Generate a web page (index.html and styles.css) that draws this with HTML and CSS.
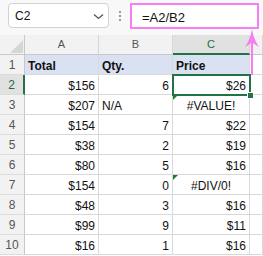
FILE: index.html
```html
<!DOCTYPE html>
<html lang="en">
<head>
    <meta charset="UTF-8">
    <title>Sheet</title>
    <link rel="stylesheet" href="styles.css">
</head>
<body>
    <div class="bar">
        <div class="namebox">
            <span>C2</span>
            <svg class="chev" width="11" height="7" viewBox="0 0 11 7"><path d="M1 1.5 L5.5 5.5 L10 1.5" fill="none" stroke="#555" stroke-width="1.3"/></svg>
        </div>
        <div class="dots"><i></i><i></i><i></i></div>
        <div class="formula">=A2/B2</div>
    </div>

    <div class="sheet">
        <div class="corner"><svg width="13" height="13" viewBox="0 0 13 13"><path d="M13 0 L13 13 L0 13 Z" fill="#d6d6d6"/></svg></div>
        <div class="colhead">A</div>
        <div class="colhead">B</div>
        <div class="colhead active">C</div>
        <div class="colhead"></div>

        <div class="rowhead">1</div>
        <div class="cell head">Total</div>
        <div class="cell head">Qty.</div>
        <div class="cell head">Price</div>
        <div class="cell"></div>

        <div class="rowhead active">2</div>
        <div class="cell num">$156</div>
        <div class="cell num">6</div>
        <div class="cell num selected">$26<span class="selbox"><i class="handle"></i></span></div>
        <div class="cell"></div>

        <div class="rowhead">3</div>
        <div class="cell num">$207</div>
        <div class="cell">N/A</div>
        <div class="cell center err">#VALUE!</div>
        <div class="cell"></div>

        <div class="rowhead">4</div>
        <div class="cell num">$154</div>
        <div class="cell num">7</div>
        <div class="cell num">$22</div>
        <div class="cell"></div>

        <div class="rowhead">5</div>
        <div class="cell num">$38</div>
        <div class="cell num">2</div>
        <div class="cell num">$19</div>
        <div class="cell"></div>

        <div class="rowhead">6</div>
        <div class="cell num">$80</div>
        <div class="cell num">5</div>
        <div class="cell num">$16</div>
        <div class="cell"></div>

        <div class="rowhead">7</div>
        <div class="cell num">$154</div>
        <div class="cell num">0</div>
        <div class="cell center err">#DIV/0!</div>
        <div class="cell"></div>

        <div class="rowhead">8</div>
        <div class="cell num">$48</div>
        <div class="cell num">3</div>
        <div class="cell num">$16</div>
        <div class="cell"></div>

        <div class="rowhead">9</div>
        <div class="cell num">$99</div>
        <div class="cell num">9</div>
        <div class="cell num">$11</div>
        <div class="cell"></div>

        <div class="rowhead">10</div>
        <div class="cell num">$16</div>
        <div class="cell num">1</div>
        <div class="cell num">$16</div>
        <div class="cell"></div>
    </div>

    <!-- callout arrow from C2 up to the formula bar -->
    <svg class="arrow" width="263" height="80" viewBox="0 0 263 80">
        <path d="M252 29 Q253.5 39 259 47 L252 42.5 L245 47 Q250.5 39 252 29 Z" fill="#f77ef0"/>
        <rect x="251" y="40" width="2" height="35" fill="#f77ef0"/>
    </svg>
</body>
</html>
```

FILE: styles.css
```css
html,body{
    margin:0px;
    padding:0px;
}
body{
    width:263px;
    height:256px;
    overflow:hidden;
    position:relative;
    background:#fff;
    font-family:"Liberation Sans", Arial, sans-serif;
    color:#111;
}
.bar{
    height:35px;
    box-sizing:border-box;
    display:flex;
    align-items:flex-start;
    padding:3px 4px 0px 8px;
    background:#f8f8f8;
}
.namebox{
    width:101px;
    height:25px;
    box-sizing:border-box;
    border:1px solid #d2d2d2;
    border-radius:4px;
    background:#fff;
    display:flex;
    align-items:center;
    justify-content:space-between;
    padding:1px 4px 0px 6px;
    font-size:12px;
}
.chev{
    margin-top:1px;
}
.dots{
    width:21px;
    height:25px;
    display:flex;
    flex-direction:column;
    align-items:center;
    justify-content:center;
    gap:2px;
}
.dots>i{
    display:block;
    width:2px;
    height:2px;
    background:#999;
}
.formula{
    flex:1;
    height:26px;
    box-sizing:border-box;
    border:2px solid #f77ef0;
    background:#fff;
    padding:5px 0px 0px 10px;
    font-size:13px;
    line-height:16px;
}
.sheet{
    display:grid;
    grid-template-columns:25px 74px 74px 77px 1fr;
    grid-template-rows:repeat(11, 20px);
}
.corner,.colhead,.rowhead{
    background:#f2f2f2;
    box-sizing:border-box;
    color:#555;
}
.corner{
    border-right:1px solid #c8c8c8;
    border-bottom:1px solid #c8c8c8;
    padding:5px 0px 0px 10px;
}
.corner>svg{
    display:block;
}
.colhead{
    border-right:1px solid #d6d6d6;
    border-bottom:1px solid #c8c8c8;
    font-size:11px;
    line-height:19px;
    text-align:center;
}
.colhead.active{
    background:#e1e1e1;
    color:#1e6b41;
    border-bottom:2px solid #217346;
}
.rowhead{
    border-right:1px solid #c8c8c8;
    border-bottom:1px solid #dcdcdc;
    font-size:12px;
    line-height:19px;
    padding-top:1px;
    text-align:center;
}
.rowhead.active{
    background:#e1e1e1;
    color:#1e6b41;
    border-right:2px solid #217346;
}
.cell{
    box-sizing:border-box;
    border-right:1px solid #d9d9d9;
    border-bottom:1px solid #d9d9d9;
    font-size:12px;
    line-height:15px;
    padding:4px 3px 0px 3px;
    white-space:nowrap;
    position:relative;
}
.cell.head{
    background:#d9e1f2;
    font-weight:bold;
}
.cell.num{
    text-align:right;
}
.cell.center{
    text-align:center;
}
.cell.err::before{
    content:"";
    position:absolute;
    left:0px;
    top:0px;
    border-top:5px solid #16822f;
    border-right:5px solid transparent;
}
.selbox{
    position:absolute;
    left:-1px;
    top:-1px;
    width:79px;
    height:22px;
    box-sizing:border-box;
    border:2px solid #217346;
    z-index:2;
}
.handle{
    position:absolute;
    left:73px;
    top:16px;
    width:5px;
    height:5px;
    background:#217346;
    border:1px solid #fff;
}
.arrow{
    position:absolute;
    left:0px;
    top:0px;
    pointer-events:none;
    z-index:5;
}
```
